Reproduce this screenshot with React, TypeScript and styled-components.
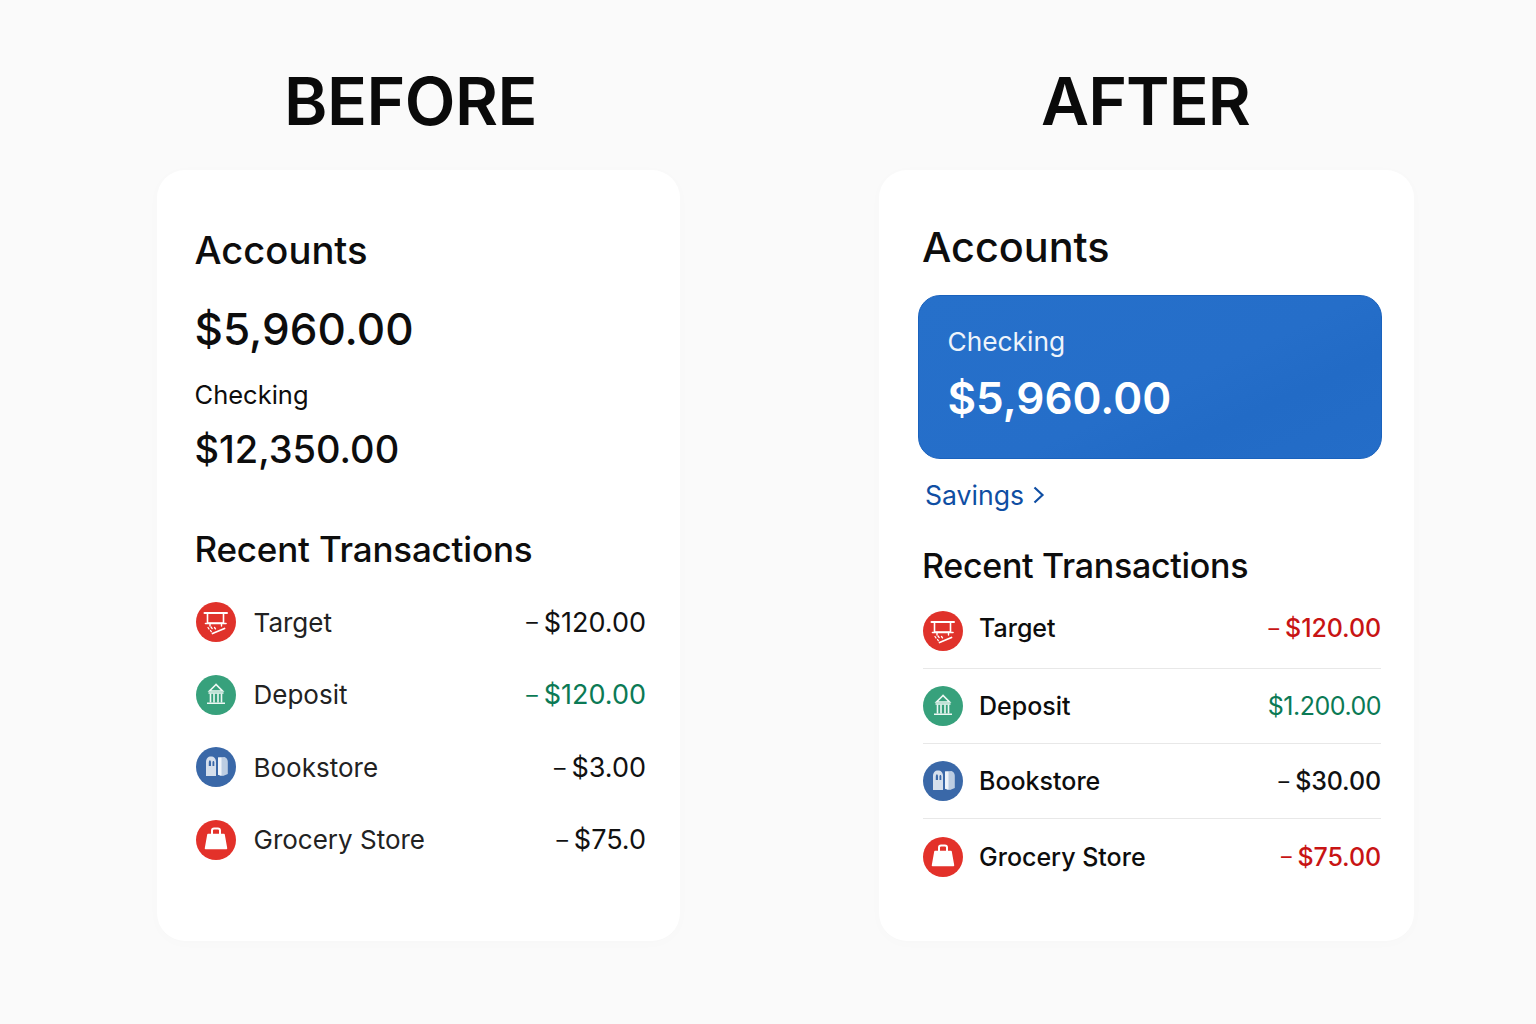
import React from "react";
import styled, { createGlobalStyle } from "styled-components";

const GlobalStyle = createGlobalStyle`
    html, body {
        margin: 0;
        padding: 0;
        background: #fafafa;
        font-family: "Inter", "Liberation Sans", sans-serif;
        color: #0d0d0d;
    }
`;

type Kind = "target" | "deposit" | "bookstore" | "grocery";
type Tone = "plain" | "red" | "green";

const ICON_COLORS: Record<Kind, string> = {
    target: "#e0322b",
    deposit: "#37a17c",
    bookstore: "#3a68a8",
    grocery: "#e3312a",
};

const TONE_COLORS: Record<Tone, string> = {
    plain: "#111111",
    red: "#c81414",
    green: "#0b7a55",
};

const MerchantIcon = ({ kind }: { kind: Kind }) => (
    <svg width="40" height="40" viewBox="0 0 40 40">
        <circle cx="20" cy="20" r="20" fill={ICON_COLORS[kind]} />
        {kind === "target" && (
            <g fill="none" stroke="#fff" strokeLinecap="round">
                <path d="M8.500 11h22.500" strokeWidth="2" />
                <path d="M11.500 11.500v9.500h16v-9.500" strokeWidth="1.600" />
                <path d="M9.500 21.500h20.500" strokeWidth="1.600" />
                <path d="M14 21.500v2.500M25.500 21.500v2.500" strokeWidth="1.400" />
                <path d="M16.500 31.500l12-5" strokeWidth="1.800" />
                <path d="M12 25.500l1 1.500M15 25l1.200 1.600M18.500 25.500l1 1.400M14.500 28.500l.8 1.200" strokeWidth="1.300" />
            </g>
        )}
        {kind === "deposit" && (
            <g fill="none" stroke="#eef8f4" strokeWidth="1.600">
                <path d="M20 9.500l-6.500 6.500h13z" />
                <path d="M12.500 18h15M11 28.200h18" />
                <path d="M14.500 18.500v9M18 18.500v9M22 18.500v9M25.500 18.500v9" />
            </g>
        )}
        {kind === "bookstore" && (
            <g>
                <path d="M10 29v-14c0-3.500 2-5.500 5-5.500s5 2 5 5.500v14z" fill="#d5dfec" />
                <path d="M12.800 19v-3.500c0-1.300.5-2.300 1.100-2.300s1.100 1 1.100 2.300v3.500z" fill="#3a68a8" />
                <path d="M16.500 19v-3.500c0-.9.400-1.600.9-1.600s.9.700.9 1.600v3.500z" fill="#3a68a8" />
                <path d="M22 10.500l6.500-.5c2 .6 3.300 2.400 3.300 5v12l-4.800 2-5-1.500z" fill="#bccde2" />
                <path d="M22 10.500h3.500v18.500l-3.500-1.200z" fill="#eef3f9" />
            </g>
        )}
        {kind === "grocery" && (
            <g>
                <path d="M12 14.500h16l2.500 14h-21z" fill="#fff" stroke="#fff" strokeLinejoin="round" strokeWidth="1.500" />
                <path d="M16 14v-3.400c0-1.200 1-2.100 2.100-2.100h3.800c1.100 0 2.100.9 2.100 2.100v3.400" fill="none" stroke="#fff" strokeWidth="2" />
            </g>
        )}
    </svg>
);

const ChevronIcon = () => (
    <svg width="12" height="18" viewBox="0 0 12 18">
        <path d="M1.500 1.500L9.500 9l-8 7.500" fill="none" stroke="#0f4ea3" strokeWidth="2.200" />
    </svg>
);

type Row = { kind: Kind; name: string; sign?: boolean; amount: string; tone: Tone };

const BEFORE_ROWS: Row[] = [
    { kind: "target", name: "Target", sign: true, amount: "$120.00", tone: "plain" },
    { kind: "deposit", name: "Deposit", sign: true, amount: "$120.00", tone: "green" },
    { kind: "bookstore", name: "Bookstore", sign: true, amount: "$3.00", tone: "plain" },
    { kind: "grocery", name: "Grocery Store", sign: true, amount: "$75.0", tone: "plain" },
];

const AFTER_ROWS: Row[] = [
    { kind: "target", name: "Target", sign: true, amount: "$120.00", tone: "red" },
    { kind: "deposit", name: "Deposit", amount: "$1.200.00", tone: "green" },
    { kind: "bookstore", name: "Bookstore", sign: true, amount: "$30.00", tone: "plain" },
    { kind: "grocery", name: "Grocery Store", sign: true, amount: "$75.00", tone: "red" },
];

export default function App() {
    return (
        <Page>
            <GlobalStyle />
            <Column>
                <BeforeHeading>BEFORE</BeforeHeading>
                <BeforeCard>
                    <BeforeTitle>Accounts</BeforeTitle>
                    <BeforeBalance>$5,960.00</BeforeBalance>
                    <BeforeLabel>Checking</BeforeLabel>
                    <BeforeSecondBalance>$12,350.00</BeforeSecondBalance>
                    <BeforeSection>Recent Transactions</BeforeSection>
                    <BeforeList>
                        {BEFORE_ROWS.map((row) => (
                            <BeforeRow key={row.name}>
                                <MerchantIcon kind={row.kind} />
                                <BeforeName>{row.name}</BeforeName>
                                <BeforeAmount $tone={row.tone}>
                                    {row.sign && <Sign>–</Sign>}
                                    {row.amount}
                                </BeforeAmount>
                            </BeforeRow>
                        ))}
                    </BeforeList>
                </BeforeCard>
            </Column>
            <Column>
                <AfterHeading>AFTER</AfterHeading>
                <AfterCard>
                    <AfterTitle>Accounts</AfterTitle>
                    <CheckingPanel>
                        <PanelLabel>Checking</PanelLabel>
                        <PanelBalance>$5,960.00</PanelBalance>
                    </CheckingPanel>
                    <SavingsLink>
                        Savings <ChevronIcon />
                    </SavingsLink>
                    <AfterSection>Recent Transactions</AfterSection>
                    <AfterList>
                        {AFTER_ROWS.map((row) => (
                            <AfterRow key={row.name}>
                                <MerchantIcon kind={row.kind} />
                                <AfterName>{row.name}</AfterName>
                                <AfterAmount $tone={row.tone}>
                                    {row.sign && <Sign>–</Sign>}
                                    {row.amount}
                                </AfterAmount>
                            </AfterRow>
                        ))}
                    </AfterList>
                </AfterCard>
            </Column>
        </Page>
    );
}

const Page = styled.div`
    width: 1536px;
    height: 1024px;
    box-sizing: border-box;
    overflow: hidden;
    display: grid;
    grid-template-columns: 523px 535px;
    column-gap: 199px;
    padding: 61px 0 0 157px;
    background: #fafafa;
`;

const Column = styled.div`
    display: flex;
    flex-direction: column;
`;

const Heading = styled.h1`
    margin: 0 0 29px;
    height: 80px;
    font-size: 66px;
    line-height: 80px;
    font-weight: 600;
    letter-spacing: -0.5px;
    color: #0a0a0a;
    text-align: center;
`;

const BeforeHeading = styled(Heading)`
    padding-right: 16px;
`;

const AfterHeading = styled(Heading)`
    letter-spacing: -0.9px;
    padding-right: 2px;
`;

const Card = styled.div`
    height: 771px;
    box-sizing: border-box;
    background: #ffffff;
    border-radius: 28px;
    box-shadow: 0 2px 14px rgba(0, 0, 0, 0.015);
`;

const BeforeCard = styled(Card)`
    padding: 55px 34px 0 37.500px;
`;

const AfterCard = styled(Card)`
    padding: 50px 33px 0 40px;
`;

const BeforeTitle = styled.div`
    font-size: 38.200px;
    line-height: 50px;
    font-weight: 500;
`;

const BeforeBalance = styled.div`
    margin-top: 26px;
    font-size: 44px;
    line-height: 56px;
    font-weight: 500;
`;

const BeforeLabel = styled.div`
    margin-top: 22px;
    font-size: 25.500px;
    line-height: 32px;
`;

const BeforeSecondBalance = styled.div`
    margin-top: 14px;
    font-size: 38px;
    line-height: 48px;
    font-weight: 500;
`;

const BeforeSection = styled.div`
    margin-top: 54px;
    font-size: 35px;
    line-height: 44px;
    font-weight: 500;
    letter-spacing: -0.2px;
`;

const BeforeList = styled.div`
    margin-top: 31px;
    display: flex;
    flex-direction: column;
    gap: 32.600px;
`;

const BeforeRow = styled.div`
    height: 40px;
    padding-left: 1px;
    display: flex;
    align-items: center;
`;

const BeforeName = styled.div`
    margin-left: 18px;
    font-size: 26px;
    color: #222222;
    flex: 1;
`;

const BeforeAmount = styled.div<{ $tone: Tone }>`
    font-size: 27px;
    color: ${({ $tone }) => TONE_COLORS[$tone]};
`;

const Sign = styled.span`
    display: inline-block;
    margin-right: 6px;
    font-size: 0.85em;
    vertical-align: 0.05em;
    font-weight: 400;
`;

const AfterTitle = styled.div`
    margin-left: 3px;
    font-size: 41.400px;
    line-height: 54px;
    font-weight: 500;
`;

const CheckingPanel = styled.div`
    box-sizing: border-box;
    height: 164px;
    width: 464px;
    margin: 21px 0 0 -1px;
    padding: 28px 28.500px;
    border: 1px solid #1a62bd;
    border-radius: 22px;
    color: #ffffff;
    background: linear-gradient(155deg, #2670ca 0%, #256ec9 55%, #226bc6 72%, #246dc8 100%);
`;

const PanelLabel = styled.div`
    font-size: 26.300px;
    line-height: 36px;
    color: #eef4fb;
`;

const PanelBalance = styled.div`
    margin-top: 9px;
    font-size: 44px;
    line-height: 58px;
    font-weight: 600;
`;

const SavingsLink = styled.div`
    margin: 18px 0 0 6px;
    display: flex;
    align-items: center;
    gap: 9px;
    font-size: 26.600px;
    line-height: 36px;
    color: #0f4ea3;
`;

const AfterSection = styled.div`
    margin: 31px 0 0 3px;
    font-size: 34px;
    line-height: 44px;
    font-weight: 500;
    letter-spacing: -0.3px;
`;

const AfterList = styled.div`
    margin: 6px 0 0 4px;
    display: flex;
    flex-direction: column;
`;

const AfterRow = styled.div`
    height: 75px;
    box-sizing: border-box;
    display: flex;
    align-items: center;
    border-bottom: 1px solid #e8e8e8;

    &:first-child > div {
        margin-bottom: 6px;
    }

    &:last-child {
        border-bottom: none;
    }
`;

const AfterName = styled.div`
    margin-left: 16px;
    font-size: 25px;
    font-weight: 500;
    flex: 1;
`;

const AfterAmount = styled.div<{ $tone: Tone }>`
    font-size: 25px;
    letter-spacing: ${({ $tone }) => ($tone === "green" ? "-0.5px" : "-0.1px")};
    font-weight: ${({ $tone }) => ($tone === "green" ? 400 : 500)};
    color: ${({ $tone }) => TONE_COLORS[$tone]};
`;
